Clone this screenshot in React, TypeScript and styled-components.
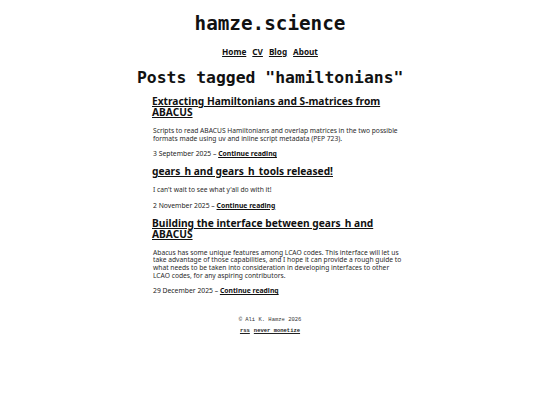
import React from 'react';
import styled, { createGlobalStyle } from 'styled-components';

const GlobalStyle = createGlobalStyle`
    html, body {
        margin: 0;
        padding: 0;
        background: #ffffff;
    }
    body {
        font-family: 'Noto Sans', 'Liberation Sans', sans-serif;
        color: #222;
    }
`;

const Page = styled.div`
    width: 540px;
    display: flex;
    flex-direction: column;
    align-items: center;
    padding-top: 13px;
`;

const SiteTitle = styled.h1`
    margin: 0;
    font-family: 'DejaVu Sans Mono', monospace;
    font-size: 19.3px;
    line-height: 22px;
    font-weight: bold;
    color: #111;
`;

const Nav = styled.nav`
    display: flex;
    gap: 6px;
    margin-top: 11px;
    font-size: 8.2px;
    font-weight: bold;
    line-height: 12px;
`;

const NavLink = styled.a`
    color: #111;
    text-decoration: underline;
`;

const Main = styled.main`
    width: 266px;
`;

const Heading = styled.h2`
    margin: 10px 0 0;
    text-align: center;
    font-family: 'DejaVu Sans Mono', monospace;
    font-size: 16.4px;
    line-height: 20px;
    font-weight: bold;
    color: #111;
    white-space: nowrap;
`;

const PostList = styled.ul`
    list-style: none;
    margin: 8px 0 0;
    padding: 0 0 0 16px;
`;

const Post = styled.li`
    margin-bottom: 8px;
`;

const PostTitle = styled.a`
    display: block;
    margin-left: -1px;
    font-size: 10.2px;
    line-height: 11px;
    font-weight: bold;
    color: #111;
    text-decoration: underline;
`;

const Summary = styled.p`
    margin: 9px 0 0;
    font-size: 6.7px;
    line-height: 7.6px;
    color: #2a2a2a;
`;

const Meta = styled.p`
    margin: 8px 0 0;
    font-size: 6.8px;
    line-height: 8px;
    color: #222;
`;

const MoreLink = styled.a`
    color: #111;
    font-weight: bold;
    text-decoration: underline;
`;

const Footer = styled.footer`
    margin-top: 13px;
    display: flex;
    flex-direction: column;
    align-items: center;
    gap: 4px;
    font-family: 'Liberation Mono', monospace;
    font-size: 5.5px;
    line-height: 7px;
    color: #333;
`;

const FooterLinks = styled.div`
    display: flex;
    gap: 4px;
    font-weight: bold;
`;

const FooterLink = styled.a`
    color: #222;
    text-decoration: underline;
`;

const posts = [
    {
        title: 'Extracting Hamiltonians and S-matrices from ABACUS',
        summary: 'Scripts to read ABACUS Hamiltonians and overlap matrices in the two possible formats made using uv and inline script metadata (PEP 723).',
        date: '3 September 2025',
    },
    {
        title: 'gears_h and gears_h_tools released!',
        summary: "I can't wait to see what y'all do with it!",
        date: '2 November 2025',
    },
    {
        title: 'Building the interface between gears_h and ABACUS',
        summary: 'Abacus has some unique features among LCAO codes. This interface will let us take advantage of those capabilities, and I hope it can provide a rough guide to what needs to be taken into consideration in developing interfaces to other LCAO codes, for any aspiring contributors.',
        date: '29 December 2025',
    },
];

export default function App() {
    return (
        <Page>
            <GlobalStyle />
            <SiteTitle>hamze.science</SiteTitle>
            <Nav>
                <NavLink href="#">Home</NavLink>
                <NavLink href="#">CV</NavLink>
                <NavLink href="#">Blog</NavLink>
                <NavLink href="#">About</NavLink>
            </Nav>
            <Main>
                <Heading>Posts tagged "hamiltonians"</Heading>
                <PostList>
                    {posts.map((p) => (
                        <Post key={p.title}>
                            <PostTitle href="#">{p.title}</PostTitle>
                            <Summary>{p.summary}</Summary>
                            <Meta>
                                {p.date} – <MoreLink href="#">Continue reading</MoreLink>
                            </Meta>
                        </Post>
                    ))}
                </PostList>
            </Main>
            <Footer>
                <div>© Ali K. Hamze 2026</div>
                <FooterLinks>
                    <FooterLink href="#">rss</FooterLink>
                    <FooterLink href="#">never monetize</FooterLink>
                </FooterLinks>
            </Footer>
        </Page>
    );
}
